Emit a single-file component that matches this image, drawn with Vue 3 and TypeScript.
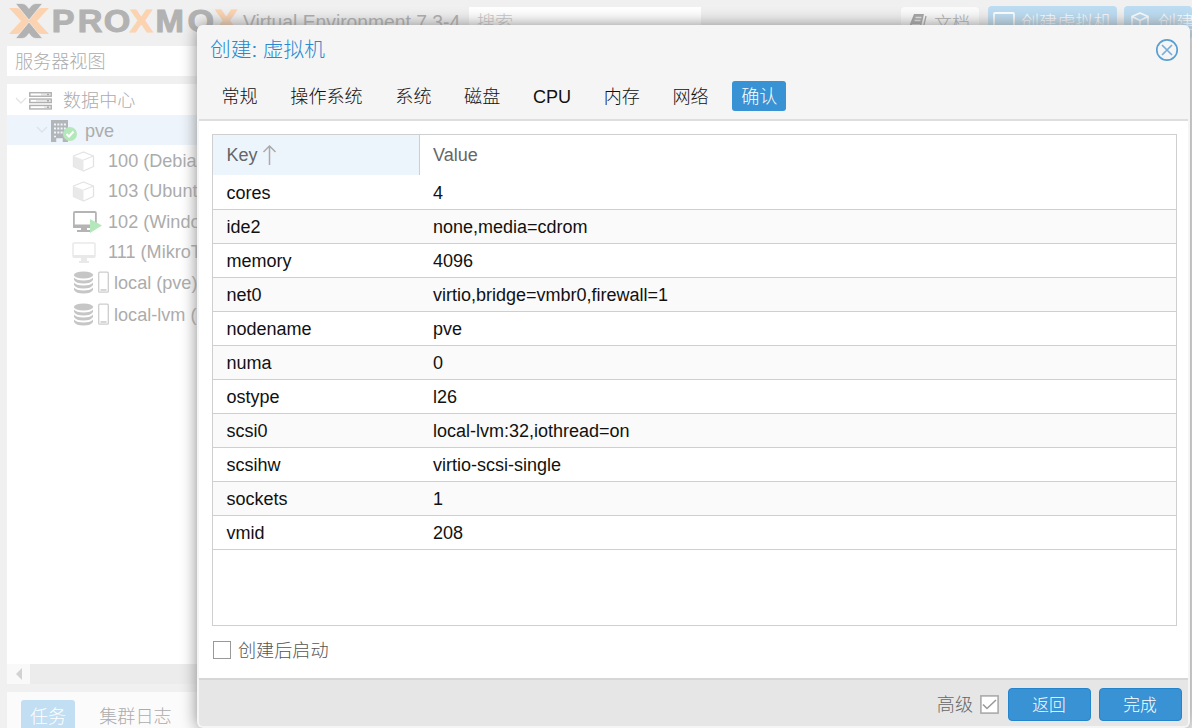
<script setup lang="ts">
interface Guest { kind: 'ct' | 'vm' | 'vm-on' | 'store'; label: string }

const tabs: string[] = ['常规', '操作系统', '系统', '磁盘', 'CPU', '内存', '网络', '确认']
const activeTab = '确认'

const guests: Guest[] = [
  { kind: 'ct', label: '100 (Debian)' },
  { kind: 'ct', label: '103 (Ubuntu)' },
  { kind: 'vm-on', label: '102 (Windows)' },
  { kind: 'vm', label: '111 (MikroTik)' },
  { kind: 'store', label: 'local (pve)' },
  { kind: 'store', label: 'local-lvm (pve)' },
]

const settings: [string, string][] = [
  ['cores', '4'],
  ['ide2', 'none,media=cdrom'],
  ['memory', '4096'],
  ['net0', 'virtio,bridge=vmbr0,firewall=1'],
  ['nodename', 'pve'],
  ['numa', '0'],
  ['ostype', 'l26'],
  ['scsi0', 'local-lvm:32,iothread=on'],
  ['scsihw', 'virtio-scsi-single'],
  ['sockets', '1'],
  ['vmid', '208'],
]
</script>

<template>
  <div class="screen">
    <header class="top">
      <svg class="logo" width="231" height="40" viewBox="0 0 231 40">
        <path fill="#fbd3b1" d="M8 8h7.500q3 0 5 2l8.500 9.500q1 1.500 0 3l-8.500 9.500q-2 2-5 2H8l12-13z" />
        <path fill="#fbd3b1" d="M48 8h-7.500q-3 0-5 2L27 19.500q-1 1.500 0 3l8.500 9.500q2 2 5 2H48L36 21z" />
        <path fill="#b2b2b2" stroke="#f0f0f0" stroke-width="0.700" d="M14.500 3.500h6.500q2.500 0 4.500 2l2.500 3 2.500-3q2-2 4.500-2h6.500L28 20z" />
        <path fill="#b2b2b2" stroke="#f0f0f0" stroke-width="0.700" d="M14.500 38.500h6.500q2.500 0 4.500-2l2.500-3 2.500 3q2 2 4.500 2h6.500L28 22z" />
        <text x="45.300 68.500 91.700 115.200 138 166.500 191" y="32" transform="scale(1.12 1)" class="wordmark">PRO<tspan class="orange">X</tspan>MO<tspan class="orange">X</tspan></text>
      </svg>
      <span class="version">Virtual Environment 7.3-4</span>
      <div class="search">搜索</div>
      <div class="top-actions">
        <div class="btn docs">
          <svg width="19" height="17" viewBox="0 0 19 17"><path d="M5 1h10l-3 13H2q-2-1-1-3z" fill="#a4a4a4" /><path d="M6.500 4.500h6M5.500 7.500h6M3 12h8" stroke="#e6e6e6" stroke-width="1.300" /><path d="M17 3l-2.500 11" stroke="#a4a4a4" stroke-width="1.300" /></svg>
          <span>文档</span>
        </div>
        <div class="btn blue vm">
          <svg width="22" height="20" viewBox="0 0 22 20"><rect x="1" y="1" width="20" height="14" rx="1" fill="none" stroke="#fff" stroke-width="1.800" /><path d="M7 18h8" stroke="#fff" stroke-width="2" /></svg>
          <span>创建虚拟机</span>
        </div>
        <div class="btn blue create-ct">
          <svg width="20" height="20" viewBox="0 0 20 20"><path d="M10 1l8 3.500v10L10 19l-8-4.500v-10zM2 4.500l8 4 8-4M10 8.500V19" fill="none" stroke="#fff" stroke-width="1.700" stroke-linejoin="round" /></svg>
          <span>创建</span>
        </div>
      </div>
    </header>

    <aside class="side">
      <div class="view">服务器视图</div>
      <div class="tree">
        <div class="node root">
          <svg class="chev" width="12" height="8" viewBox="0 0 12 8"><path d="M1 1l5 5 5-5" fill="none" stroke="#e4e4e4" stroke-width="1.400" /></svg>
          <svg width="23" height="18" viewBox="0 0 23 18">
            <g fill="#e6e6e6" stroke="#b0b0b0" stroke-width="1.300"><rect x="0.700" y="0.700" width="21.600" height="3.600" /><rect x="0.700" y="7" width="21.600" height="3.600" /><rect x="0.700" y="13.400" width="21.600" height="3.600" /></g>
            <path d="M2 2.500h10M2 8.800h5M2 15.200h13" stroke="#fff" stroke-width="1.500" />
            <path d="M18 2.500h2M18 8.800h2M18 15.200h2" stroke="#aaa" stroke-width="1.500" />
          </svg>
          <span>数据中心</span>
        </div>
        <div class="node host">
          <svg class="chev" width="12" height="8" viewBox="0 0 12 8"><path d="M1 1l5 5 5-5" fill="none" stroke="#dde3e8" stroke-width="1.400" /></svg>
          <svg width="28" height="23" viewBox="0 0 28 23">
            <path fill="#b3b6b9" d="M1 0h17v22H1z" />
            <path d="M4 4.500h12M4 8.500h12M4 12.500h12" stroke="#edf4fb" stroke-width="2" stroke-dasharray="2 1.300" />
            <path d="M4 16.500h2M7 19h5v3H7z" stroke="#edf4fb" stroke-width="1.500" fill="#edf4fb" />
            <circle cx="20" cy="14" r="7" fill="#b4e8bb" /><path d="M16.500 14l2.500 2.500 4.500-5" fill="none" stroke="#fff" stroke-width="2" />
          </svg>
          <span>pve</span>
        </div>
        <div v-for="g in guests" :key="g.label" class="node" :class="g.kind">
          <svg v-if="g.kind === 'ct'" width="23" height="21" viewBox="0 0 23 21"><path d="M11.500 1l10 4v10.500l-10 4.500-10-4.500V5z" fill="#fff" stroke="#e2e2e2" stroke-width="1.300" stroke-linejoin="round" /><path d="M1.500 5l10 4v11l-10-4.500z" fill="#e9e9e9" /><path d="M11.500 9l10-4" stroke="#e4e4e4" stroke-width="1.300" /></svg>
          <svg v-else-if="g.kind === 'vm-on'" width="31" height="22" viewBox="0 0 31 22"><rect x="1.900" y="1" width="22" height="15" rx="1" fill="#fff" stroke="#b4b4b4" stroke-width="1.800" /><path d="M1 13.500h23v3.500H1zM9 17h6v2h3v2H5v-2h4z" fill="#b4b4b4" /><path d="M18 8l12 6.500L18 22z" fill="#b4e8bb" /></svg>
          <svg v-else-if="g.kind === 'vm'" width="24" height="22" viewBox="0 0 24 22"><rect x="1" y="1" width="22" height="14" rx="1" fill="#fff" stroke="#e9e9e9" stroke-width="1.500" /><path d="M1 13h22v3H1zM9 16h6v3h2v2H7v-2h2z" fill="#e9e9e9" /></svg>
          <svg v-else width="37" height="23" viewBox="0 0 37 23"><g fill="#c6c6c6"><ellipse cx="11.500" cy="4" rx="9.700" ry="3.500" /><path d="M2 6.500q2 3 9.500 3t9.500-3v2.500q-2 3.500-9.500 3.500T2 9zM2 11.500q2 3 9.500 3t9.500-3v2.500q-2 3.500-9.500 3.500T2 14zM2 16.500q2 3 9.500 3t9.500-3v2.500q-2 3.500-9.500 3.500T2 19z" /></g><rect x="26.700" y="1.200" width="9.600" height="20" rx="1" fill="#fff" stroke="#cdcdcd" stroke-width="1.300" /><path d="M28.500 19h6" stroke="#bbb" stroke-width="1.200" /></svg>
          <span>{{ g.label }}</span>
        </div>
        <div class="hscroll"><div class="arrow"><i></i></div></div>
      </div>
      <div class="log-tabs"><span class="log on">任务</span><span class="log">集群日志</span></div>
    </aside>

    <section class="dialog">
      <div class="title">
        <h1>创建: 虚拟机</h1>
        <svg width="24" height="24" viewBox="0 0 24 24"><circle cx="12" cy="12" r="10.200" fill="none" stroke="#5a9fd0" stroke-width="1.700" /><path d="M7 7l10 10M17 7L7 17" stroke="#78addb" stroke-width="1.700" /></svg>
      </div>
      <nav class="tabs"><span v-for="t in tabs" :key="t" class="tab" :class="{ active: t === activeTab }">{{ t }}</span></nav>
      <div class="body">
        <div class="grid">
          <div class="row head">
            <div class="key">Key<svg width="15" height="20" viewBox="0 0 15 20"><path d="M7.500 20V1M1.500 7l6-6 6 6" fill="none" stroke="#aaa" stroke-width="1.500" /></svg></div>
            <div class="val">Value</div>
          </div>
          <div v-for="[k, v] in settings" :key="k" class="row">
            <div class="key">{{ k }}</div><div class="val">{{ v }}</div>
          </div>
        </div>
        <div class="start"><span class="box"></span><span>创建后启动</span></div>
      </div>
      <footer class="foot">
        <span class="adv-label">高级</span>
        <svg class="adv" width="19" height="19" viewBox="0 0 19 19"><rect x="0.900" y="0.900" width="17.200" height="17.200" fill="#fff" stroke="#aaa" stroke-width="1.600" /><path d="M3 9.500l4 4L16 5" fill="none" stroke="#999" stroke-width="1.600" /></svg>
        <button>返回</button><button>完成</button>
      </footer>
    </section>
  </div>
</template>

<style>
body { margin: 0; overflow: hidden; }
</style>

<style scoped>
* { box-sizing: border-box; }
.screen { position: relative; width: 1192px; height: 728px; overflow: hidden; background: #f0f0f0; color: #acacac; font: 300 18.1px/1 "Liberation Sans", "Noto Sans CJK SC", sans-serif; white-space: nowrap; }
svg { display: block; flex: none; }
.top { display: flex; height: 46px; align-items: flex-start; }
.logo { margin-left: 1px; overflow: visible; }
.wordmark { font: bold 30.500px "Liberation Sans", sans-serif; fill: #b2b2b2; stroke: #b2b2b2; stroke-width: 1px; }
.orange { fill: #fbd3b1; stroke: #fbd3b1; }
.version { margin: 12px 0 0 11px; width: 226px; font-size: 19.300px; line-height: 22px; }
.search { width: 232px; height: 32px; margin-top: 7px; padding: 6px 8px; line-height: 20px; background: #fff; color: #c6c6c6; }
.top-actions { display: flex; margin-left: 200px; padding-top: 6px; }
.version, .search, .top-actions { flex: none; }
.btn { display: flex; flex: none; align-items: flex-start; height: 33px; border-radius: 4px; padding-top: 6px; }
.btn span { line-height: 23px; }
.docs { width: 78px; margin: 1px 9px 0 0; padding-left: 8px; gap: 6px; background: #fbfbfb; }
.blue { background: #bcdcf2; color: #fff; }
.btn.vm { width: 129px; margin-right: 7px; padding-left: 5px; gap: 6px; }
.create-ct { width: 68px; padding-left: 6px; gap: 8px; }
.side { width: 260px; padding-left: 7px; }
.view { height: 30px; padding-left: 8px; background: #fff; line-height: 33px; }
.tree { display: flex; flex-direction: column; height: 600px; margin-top: 8px; background: #fff; }
.node { display: flex; align-items: center; height: 30.300px; padding-left: 65px; flex: none; }
.node span { padding-top: 2px; }
.node.root { padding: 2px 0 0 8px; height: 31px; }
.root .chev { margin-right: 2px; }
.root span { margin-left: 11px; }
.node.host { height: 30px; padding-left: 29px; background: #edf4fb; }
.host .chev { margin-right: 2px; }
.host svg + svg { margin-top: 3px; }
.host span { margin-left: 7px; }
.node.ct { gap: 13px; }
.node.ct svg { margin-top: 3px; }
.node.vm { gap: 12px; }
.node.vm svg, .node.vm-on svg { margin-top: 3px; }
.node.vm-on { gap: 5px; }
.node.store { height: 32px; gap: 5px; }
.node.store svg { margin-top: 1px; }
.hscroll { margin-top: auto; height: 20px; background: #ececec; }
.arrow { display: flex; width: 23px; height: 20px; background: #f9f9f9; align-items: center; justify-content: center; }
.arrow i { border: 6px solid transparent; border-left: 0; border-right-color: #d2d2d2; }
.log-tabs { display: flex; margin-top: 8px; height: 40px; background: #fbfbfb; padding: 8px 0 0 14px; }
.log { height: 32px; padding: 0 9px; margin-right: 15px; line-height: 34px; }
.log.on { background: #c1def3; color: #fff; border-radius: 3px; }
.dialog { position: absolute; left: 197px; top: 25px; width: 993px; height: 703px; display: flex; flex-direction: column; border: 2px solid #f5f5f5; border-top-width: 0; border-radius: 6px; overflow: hidden; background: #f5f5f5; color: #111; box-shadow: 0 0 16px #888; }
.title { display: flex; justify-content: space-between; height: 48px; padding: 13px 9px 0 12px; }
h1 { margin: 0 0 0 -1px; font-size: 20.700px; line-height: 23px; font-weight: 300; color: #2889d0; }
.title svg { margin-top: -0.500px; }
.tabs { display: flex; height: 48px; gap: 14.600px; padding: 8px 0 0 13.500px; border-bottom: 2px solid #dedede; }
.tab { height: 30px; padding: 0 9px; line-height: 32px; border-radius: 3px; }
.tab.active { background: #3892d4; color: #fff; }
.body { flex: 1; padding: 13px 11px 0 13px; background: #fff; }
.grid { height: 492px; border: 1px solid #cfcfcf; }
.row { display: flex; height: 34px; border-bottom: 1px solid #cfcfcf; line-height: 35px; font-size: 18px; }
.row:nth-child(odd) { background: #fafafa; }
.row .key { display: flex; width: 207px; padding-left: 13.500px; }
.row .val { padding-left: 13px; }
.row.head { height: 41px; line-height: 40px; border: 0; color: #666; background: #fff; }
.head .key { height: 40px; align-items: center; gap: 4px; background: #edf5fc; border-right: 1px solid #cfcfcf; line-height: 39px; }
.start { display: flex; align-items: center; gap: 7px; height: 48px; color: #555; }
.start span + span { padding-top: 2px; }
.box { width: 18px; height: 18px; margin-left: 1px; border: 1.500px solid #999; }
.foot { display: flex; justify-content: flex-end; align-items: center; height: 49px; padding: 0 6px 0 0; border-top: 2px solid #d6d6d6; background: #e6e6e6; color: #666; margin-bottom: -1px; }
.adv-label { padding-top: 3px; }
.adv { margin: 1px 9px 0 7px; }
button { width: 83px; height: 33px; margin: 2px 0 0; border: 1px solid #2484cc; border-radius: 4px; background: #3892d4; color: #fff; font: 300 16.700px "Liberation Sans", "Noto Sans CJK SC", sans-serif; padding: 0 1px 1px 0; }
button + button { margin-left: 8px; }
</style>
